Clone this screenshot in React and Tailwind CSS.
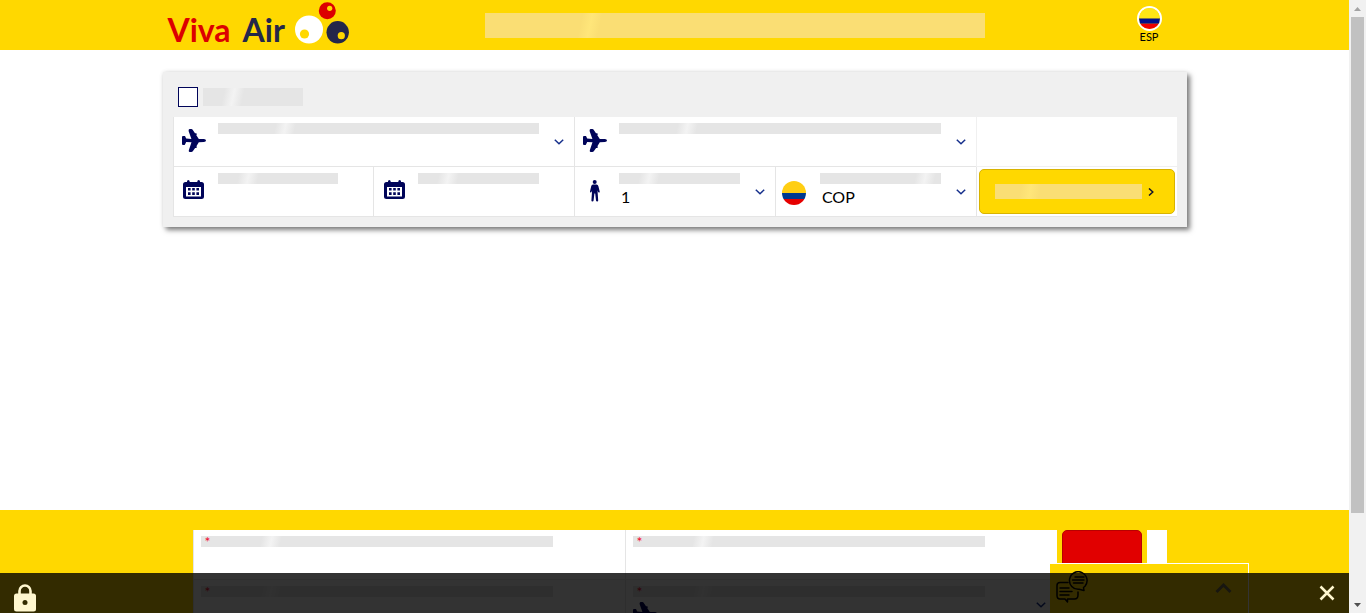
import React from "react";

function Skeleton({ className = "", tone = "gray", at = 21 }) {
  const base = tone === "gold" ? "bg-[#fade74]" : "bg-[#e5e5e5]";
  const shine = tone === "gold" ? "via-[#ffe67a]" : "via-[#f3f3f3]";
  return (
    <span aria-hidden="true" className={`relative block overflow-hidden ${base} ${className}`}>
      <span
        className={`absolute inset-y-0 w-5 -translate-x-1/2 -skew-x-12 bg-linear-to-r from-transparent to-transparent ${shine}`}
        style={{ left: `${at}%` }}
      />
    </span>
  );
}

function Plane() {
  return (
    <svg width="24" height="24" viewBox="0 0 24 24" fill="#000459" aria-hidden="true">
      <path d="M0 8q0-1 1-1h2l1.200 2.600L9.400 10 6.600 2Q6.500 0 7.600 0h1.700q1 0 1.500.9L13 4.200h.9q.9 0 .9.900t-.6 1L16.800 9.900l5.100.2Q24 10.500 24 11.600t-2.100 1.500l-5.100.2-2.400 4q.4.200.4.900t-.8.900h-.9l-2.300 3.200q-.5.800-1.500.8H7.600q-1.100 0-.8-1.800l2.700-8-5.300-.3L3 15.500q-.2.500-1 .5H1q-1 0-1-1z" />
    </svg>
  );
}

function Calendar() {
  return (
    <svg width="21" height="19" viewBox="0 0 21 19" aria-hidden="true">
      <path fill="#000459" fillRule="evenodd" d="M4 1.500Q4 0 5.300 0t1.400 1.500V2h7.600v-.5Q14.300 0 15.700 0T17 1.500V2h1.500Q21 2 21 4.500v12q0 2.500-2.500 2.500h-16Q0 19 0 16.500v-12Q0 2 2.500 2H4zM3 7v9.500h15V7z" />
      <path fill="#000459" d="M5 8h2.600v2.600H5zM9.200 8h2.600v2.600H9.200zM13.400 8H16v2.600h-2.600zM5 12.300h2.600v2.600H5zM9.200 12.300h2.600v2.600H9.200zM13.400 12.300H16v2.600h-2.600z" />
    </svg>
  );
}

function Person() {
  return (
    <svg width="10" height="22" viewBox="0 0 10 22" fill="#000459" aria-hidden="true">
      <ellipse cx="4.700" cy="2" rx="2" ry="2" />
      <path d="M3 4.400h3.600q1.400 0 1.800 1.800l1.300 5.200q.1 1-.6 1.200-.8.100-1.100-.8l-.5-1.500.7 10.200q0 .9-1 1-1 0-1.200-1L5.200 13.600h-.8L3.600 20.500q-.2 1-1.200 1-1-.1-1-1l.7-10.200-.5 1.500q-.3.900-1 .8-.8-.2-.6-1.200L1.200 6.200Q1.600 4.400 3 4.400z" />
    </svg>
  );
}

function Chevron() {
  return (
    <svg width="10" height="6" viewBox="0 0 10 6" fill="none" stroke="#16308c" strokeWidth="1.500" className="pointer-events-none" aria-hidden="true">
      <path d="M.8.700 5 4.700 9.200.700" />
    </svg>
  );
}

function Flag({ size, yellow, blue, red }) {
  return (
    <svg width={size} height={size} viewBox="0 0 24 24" className="rounded-full" aria-hidden="true">
      <path fill={yellow} d="M0 0h24v12H0z" />
      <path fill={blue} d="M0 12h24v6H0z" />
      <path fill={red} d="M0 18h24v6H0z" />
    </svg>
  );
}

function Logo() {
  return (
    <a href="#" className="flex h-[50px] items-end">
      <span className="flex gap-3 pb-0.5 text-[32px] leading-9 font-bold whitespace-nowrap text-[#dc0000]">
        <span>Viva</span>
        <span className="text-[#24274a]">Air</span>
      </span>
      <svg width="56" height="44" viewBox="0 0 56 44" className="mb-1 ml-2.5" aria-hidden="true">
        <circle cx="14" cy="27.500" r="14" fill="#fff" />
        <circle cx="9.500" cy="32" r="4.600" fill="#ffd800" />
        <circle cx="32.300" cy="8.800" r="8.500" fill="#dc0000" />
        <circle cx="34.700" cy="6.300" r="2.600" fill="#ffd800" />
        <circle cx="42.700" cy="30.300" r="11.200" fill="#24274a" />
        <circle cx="46.300" cy="33.700" r="3.600" fill="#ffd800" />
      </svg>
    </a>
  );
}

const control = "block h-6 w-full min-w-0 appearance-none bg-transparent px-0.5 text-base leading-6 font-normal text-black outline-none";

function Field({ label, icon, at, wide, chevron, children }) {
  return (
    <label aria-label={label} className={`relative flex h-[50px] border-b border-l border-[#e5e5e5] bg-white ${wide ? "col-span-2" : ""}`}>
      <span className="flex w-11 shrink-0 items-center justify-center pr-1 pb-0.5">{icon}</span>
      <span className="min-w-0 flex-1 pt-1.5">
        <Skeleton className="mr-[35px] h-[11px]" at={at} />
        <span className="block pt-px">{children}</span>
      </span>
      {chevron && (
        <span className="pointer-events-none absolute top-[22px] right-2.5">
          <Chevron />
        </span>
      )}
    </label>
  );
}

function Header() {
  return (
    <header className="h-[50px] shrink-0 bg-[#ffd800]">
      <div className="mx-auto flex max-w-[1024px] items-start justify-between pr-[25px] pl-[5px]">
        <div className="flex w-[317px]">
          <Logo />
        </div>
        <Skeleton tone="gold" className="mt-[13px] h-[25px] w-[500px] shrink" at={21} />
        <div className="flex flex-1 justify-end">
          <button type="button" className="flex flex-col items-center pt-1.5 text-[11px] leading-3 text-black">
            <span className="rounded-full border-2 border-white">
              <Flag size={21} yellow="#ffe715" blue="#00108c" red="#f00000" />
            </span>
            ESP
          </button>
        </div>
      </div>
    </header>
  );
}

function SearchPanel() {
  return (
    <form className="mx-auto max-w-[1024px] bg-[#f0f0f0] px-2.5 pt-[15px] pb-2.5 shadow-[3px_3px_5px_rgba(0,0,0,0.5),0_0_4px_rgba(0,0,0,0.1)]">
      <label aria-label="Solo ida" className="flex h-5 items-center gap-[5px] pl-[5px]">
        <input type="checkbox" className="size-5 appearance-none border border-[#000459] bg-white" />
        <Skeleton className="h-[18px] w-[100px]" at={30} />
      </label>
      <div className="mt-2.5 grid grid-cols-5">
        <Field label="Origen" icon={<Plane />} wide chevron>
          <input type="text" className={control} />
        </Field>
        <Field label="Destino" icon={<Plane />} wide chevron>
          <input type="text" className={control} />
        </Field>
        <div className="border-b border-l border-[#f0f0f0] bg-white" />
        <Field label="Fecha de ida" icon={<span className="pb-0.5"><Calendar /></span>} at={25}>
          <input type="text" className={control} />
        </Field>
        <Field label="Fecha de regreso" icon={<span className="pb-0.5"><Calendar /></span>} at={25}>
          <input type="text" className={control} />
        </Field>
        <Field label="Pasajeros" icon={<Person />} at={25} chevron>
          <select className={control}>
            <option>1</option>
          </select>
        </Field>
        <Field
          label="Moneda"
          icon={<span className="pt-1 pr-1"><Flag size={24} yellow="#ffce12" blue="#00398f" red="#e60000" /></span>}
          at={87}
          chevron
        >
          <select className={control}>
            <option>COP</option>
          </select>
        </Field>
        <div className="border-b border-l border-[#e5e5e5] bg-white p-0.5">
          <button type="button" aria-label="Buscar" className="flex h-[45px] w-full items-center gap-1.5 rounded-[5px] border border-[#d8b300] bg-[#ffd800] pr-5 pl-[15px]">
            <Skeleton tone="gold" className="h-[15px] flex-1" at={24} />
            <svg width="6" height="8" viewBox="0 0 6 8" fill="none" stroke="#14142c" strokeWidth="1.500" aria-hidden="true">
              <path d="M1 .5 4.800 4 1 7.500" />
            </svg>
          </button>
        </div>
      </div>
    </form>
  );
}

function SignupField({ label, children }) {
  return (
    <label aria-label={label} className="relative block h-[50px] border-b border-l border-[#e5e5e5] bg-white px-[7px] pt-1.5">
      <span className="relative block">
        <Skeleton className="mr-[65px] h-[11px]" at={20} />
        <span className="absolute top-0 left-1 text-sm leading-3 text-[#f01030]">*</span>
      </span>
      {children || <input type="text" className={control} />}
    </label>
  );
}

function Signup() {
  return (
    <section className="shrink-0 bg-[#ffd800] pt-5">
      <form className="mx-auto flex max-w-[1024px] items-start pr-5 pl-[30px]">
        <div className="grid flex-1 grid-cols-2">
          <SignupField label="Nombre" />
          <SignupField label="Correo" />
          <SignupField label="Apellido" />
          <SignupField label="Ciudad">
            <span className="flex items-start justify-between pt-[5px] pr-1">
              <Plane />
              <Chevron />
            </span>
          </SignupField>
        </div>
        <div className="w-[90px] px-[5px]">
          <button type="button" aria-label="Enviar" className="block h-10 w-full rounded-[5px] border border-[#b80000] bg-[#e10000]" />
        </div>
        <div className="h-[50px] w-5 bg-white" />
      </form>
    </section>
  );
}

function ChatWidget() {
  return (
    <button type="button" aria-label="Chat" className="absolute right-[100px] bottom-0 flex h-[50px] w-[199px] items-start justify-between border-t border-r border-white bg-[#ffd800] pt-[7px] pr-4 pl-1.5">
      <svg width="32" height="32" viewBox="0 0 32 32" fill="none" stroke="#000" strokeWidth="1.500" strokeLinejoin="round" strokeLinecap="round" aria-hidden="true">
        <path d="M12 11.500H4Q1 11.500 1 14.500v10Q1 28 4 28h5l2.500 3v-3h7q3.500 0 3.500-4v-3" />
        <path d="M4 17h9M4 20.500h12M4 24h9" />
        <path d="M27.500 16.500 28 19.500 23 18.300A8.800 8.800 0 1 1 29 15.200Z" />
        <path d="M19 6h9M16.500 9H28M17.500 12H27" />
      </svg>
      <svg width="17" height="11" viewBox="0 0 17 11" fill="none" stroke="#77714f" strokeWidth="3" className="mt-3" aria-hidden="true">
        <path d="m1.500 9 7-7 7 7" />
      </svg>
    </button>
  );
}

function StatusBar() {
  return (
    <div className="absolute inset-x-0 bottom-0 flex h-10 items-center justify-between bg-black/80 px-3.5">
      <svg width="22" height="28" viewBox="0 0 22 28" className="mt-2.5" aria-hidden="true">
        <path d="M5.500 11V7a5.500 5.500 0 0 1 11 0v4" fill="none" stroke="#fff7cf" strokeWidth="2.600" />
        <rect y="9.500" width="22" height="18" rx="2.500" fill="#fff7cf" />
        <circle cx="11" cy="18.500" r="2.500" fill="#332b00" />
      </svg>
      <button type="button" aria-label="Cerrar">
        <svg width="16" height="16" viewBox="0 0 16 16" stroke="#fff7cf" strokeWidth="2.500" aria-hidden="true">
          <path d="m1.500 1.500 13 13M14.500 1.500l-13 13" />
        </svg>
      </button>
    </div>
  );
}

function ScrollRail() {
  return (
    <div aria-hidden="true" className="flex w-[17px] shrink-0 flex-col items-center bg-[#f1f1f1]">
      <span className="flex h-[17px] shrink-0 items-center justify-center">
        <svg width="7" height="4" viewBox="0 0 7 4" fill="#a3a3a3"><path d="M3.500 0 7 4H0z" /></svg>
      </span>
      <span className="flex min-h-0 flex-1 flex-col">
        <span className="h-6/7 w-[13px] bg-[#c1c1c1]" />
      </span>
      <span className="flex h-[17px] shrink-0 items-center justify-center">
        <svg width="7" height="4" viewBox="0 0 7 4" fill="#505050"><path d="M0 0h7L3.500 4z" /></svg>
      </span>
    </div>
  );
}

export default function App() {
  return (
    <div className="flex h-screen overflow-hidden bg-white font-['Lato','Open_Sans',sans-serif]">
      <div className="relative flex min-w-0 flex-1 flex-col overflow-hidden">
        <Header />
        <main className="min-h-[460px] shrink-0 pt-[22px]">
          <SearchPanel />
        </main>
        <Signup />
        <ChatWidget />
        <StatusBar />
      </div>
      <ScrollRail />
    </div>
  );
}
